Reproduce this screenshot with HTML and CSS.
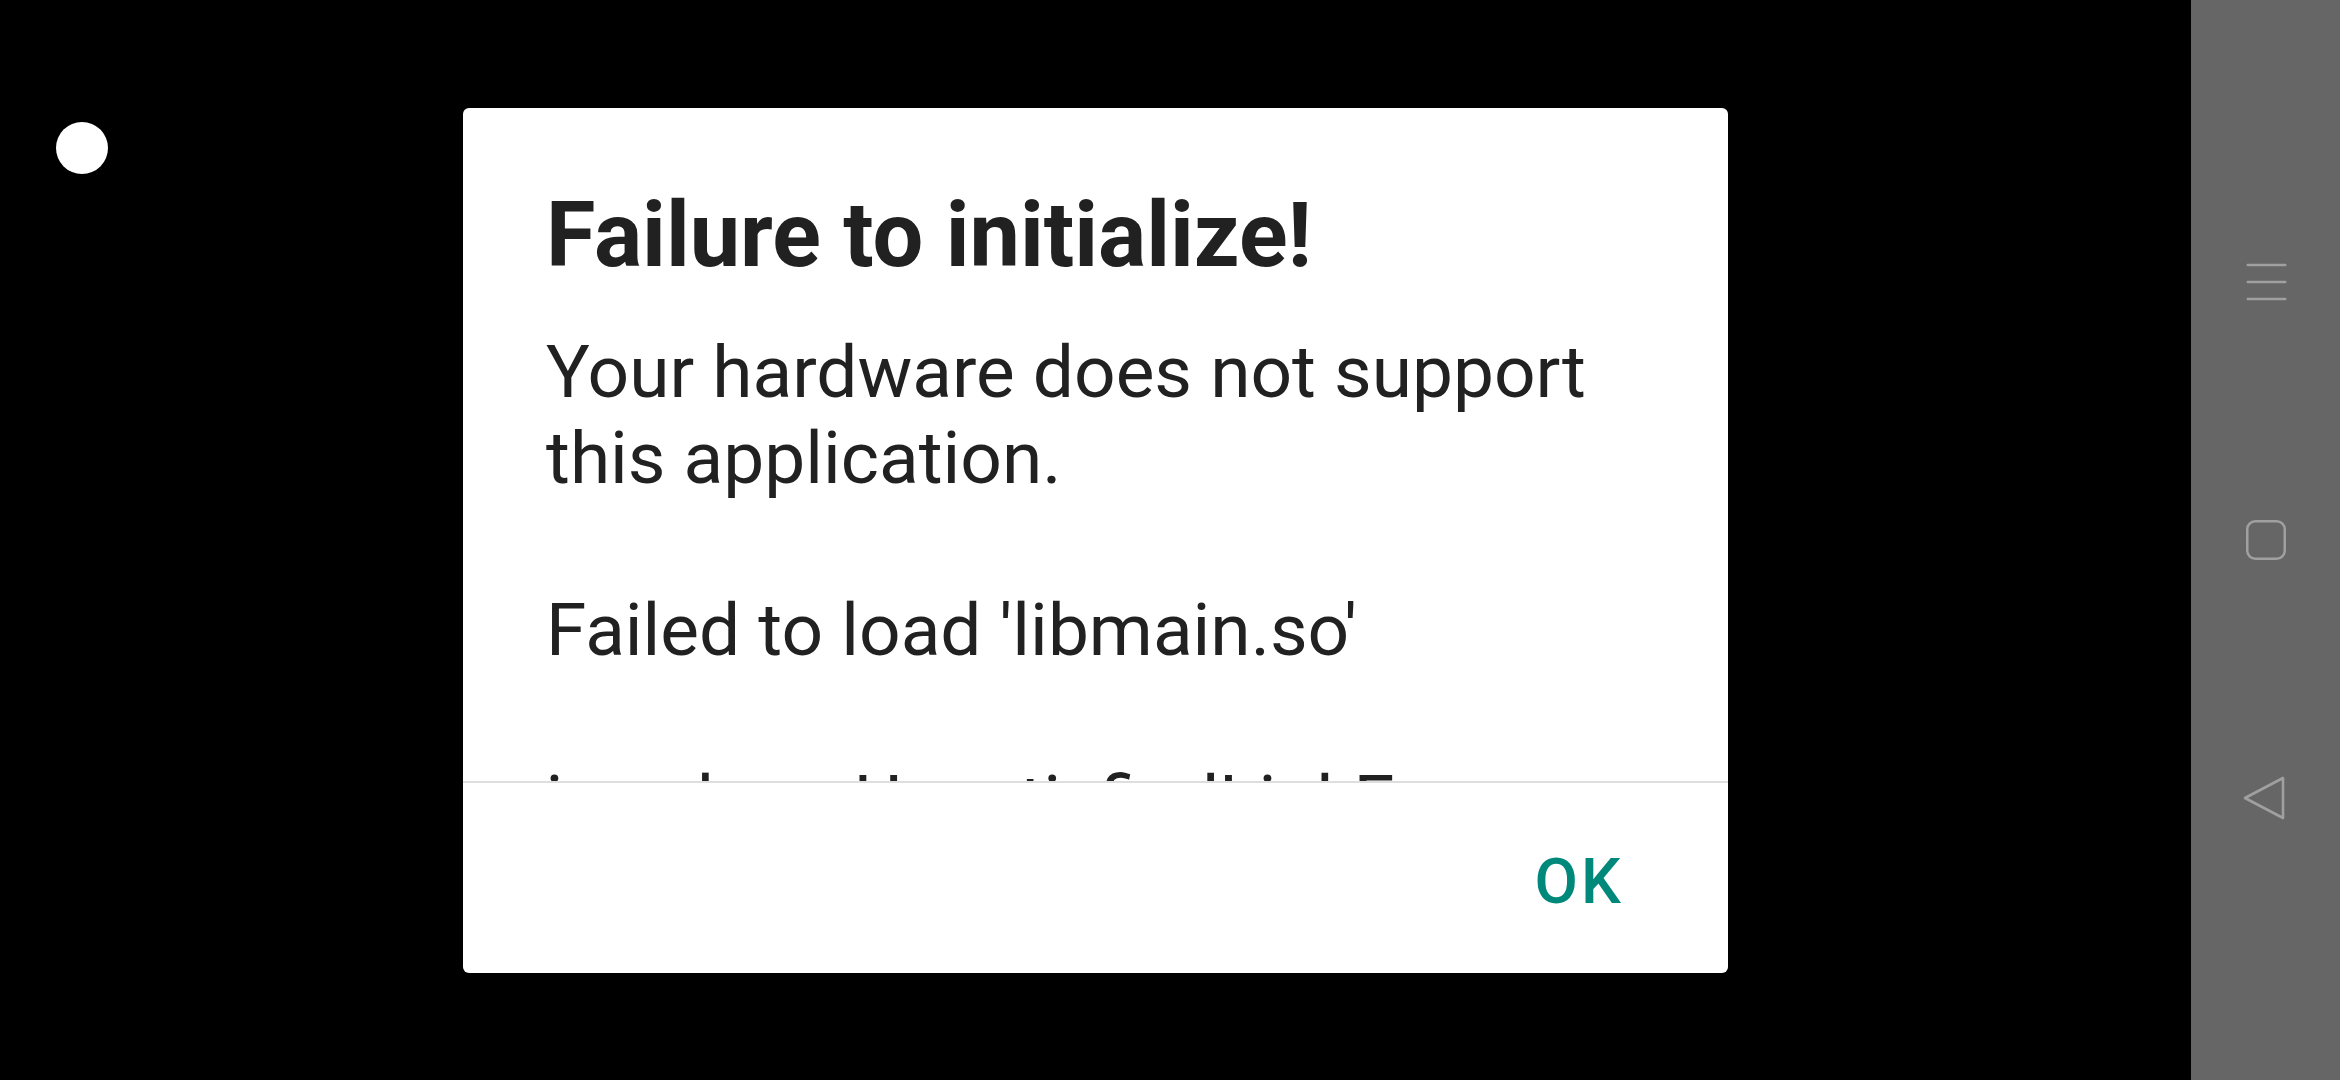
FILE: index.html
```html
<!DOCTYPE html>
<html lang="en">
<head>
<meta charset="utf-8">
<title>Failure to initialize!</title>
<link rel="stylesheet" href="styles.css">
</head>
<body>
<div class="screen">
  <div class="app-area">
    <div class="dot"></div>
    <div class="dialog">
      <h1 class="dialog-title">Failure to initialize!</h1>
      <div class="dialog-message">Your hardware does not support this application.

Failed to load 'libmain.so'

java.lang.UnsatisfiedLinkError: dlopen failed: library "libmain.so" not found</div>
      <div class="dialog-actions">
        <span class="btn-ok">OK</span>
      </div>
    </div>
  </div>
  <nav class="navbar">
    <svg class="nav-icon" viewBox="0 0 48 48" width="48" height="48">
      <g stroke="#a0a0a0" stroke-width="2.5" stroke-linecap="round" fill="none">
        <line x1="5.75" y1="7" x2="43.25" y2="7"/>
        <line x1="5.75" y1="24" x2="43.25" y2="24"/>
        <line x1="5.75" y1="41" x2="43.25" y2="41"/>
      </g>
    </svg>
    <svg class="nav-icon" viewBox="0 0 48 48" width="48" height="48">
      <rect x="5.25" y="5.25" width="37.5" height="37.5" rx="8" ry="8" fill="none" stroke="#a0a0a0" stroke-width="2.5"/>
    </svg>
    <svg class="nav-icon" viewBox="0 0 48 48" width="48" height="48">
      <path d="M41 4 L41 44 L3 24 Z" fill="none" stroke="#a0a0a0" stroke-width="2.6" stroke-linejoin="round"/>
    </svg>
  </nav>
</div>
</body>
</html>
```
FILE: styles.css
```css
html, body {
  margin: 0;
  padding: 0;
  background: #000;
}

body {
  font-family: Roboto, "Noto Sans", sans-serif;
}

.screen {
  display: flex;
  width: 2340px;
  height: 1080px;
  overflow: hidden;
}

.app-area {
  position: relative;
  flex: 1;
  display: flex;
  align-items: center;
  justify-content: center;
  background: #000;
}

.dot {
  position: absolute;
  left: 56px;
  top: 122px;
  width: 52px;
  height: 52px;
  border-radius: 50%;
  background: #fff;
}

.dialog {
  width: 1265px;
  height: 865px;
  background: #fff;
  border-radius: 6px;
  display: flex;
  flex-direction: column;
  overflow: hidden;
}

.dialog-title {
  margin: 0;
  padding: 76px 83px 0 83px;
  font-size: 90px;
  line-height: 104px;
  font-weight: 700;
  color: #212121;
}

.dialog-message {
  margin-top: 41px;
  padding: 0 83px;
  height: 452px;
  overflow: hidden;
  white-space: pre-line;
  font-size: 73px;
  line-height: 86px;
  color: #212121;
}

.dialog-actions {
  flex: 1;
  display: flex;
  justify-content: flex-end;
  align-items: flex-start;
  border-top: 2px solid #dedede;
  padding: 62px 104px 0 0;
}

.btn-ok {
  font-size: 63px;
  line-height: 74px;
  font-weight: 500;
  letter-spacing: 0.05em;
  color: #00897b;
}

.navbar {
  width: 149px;
  background: #666666;
  display: flex;
  flex-direction: column;
  align-items: center;
  justify-content: center;
  gap: 210px;
  box-sizing: border-box;
}

.nav-icon {
  display: block;
  flex: none;
}
```
